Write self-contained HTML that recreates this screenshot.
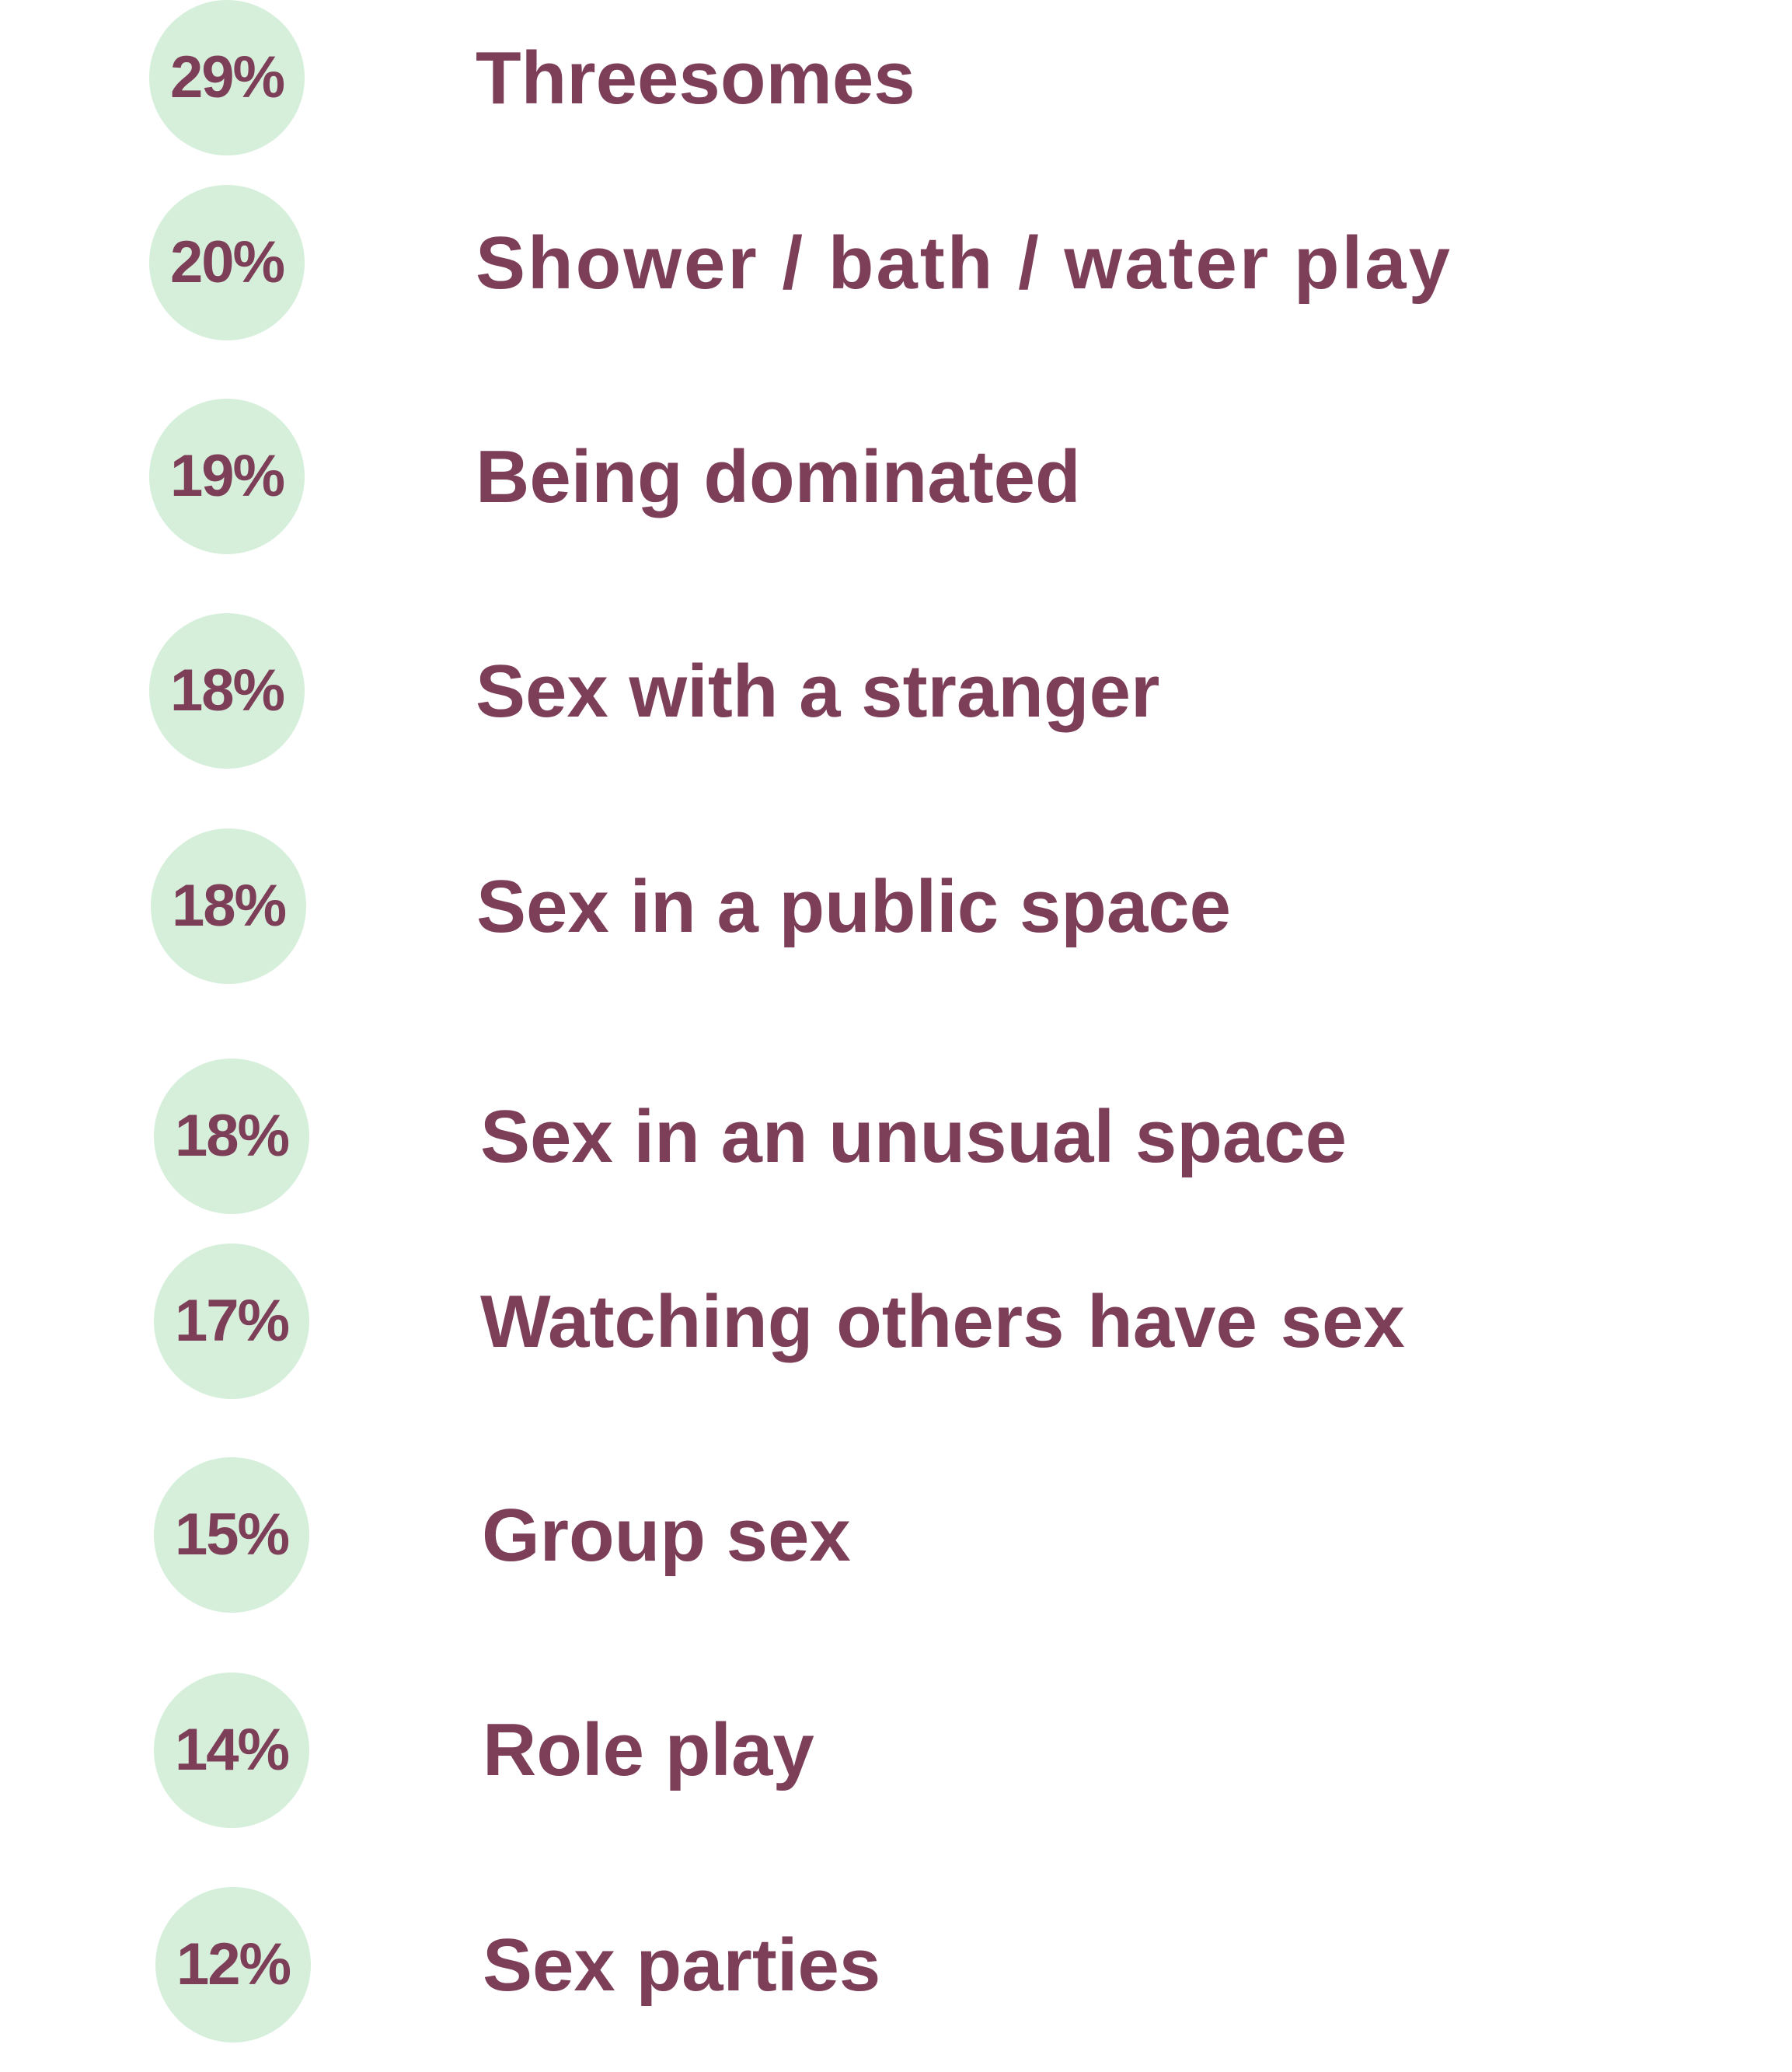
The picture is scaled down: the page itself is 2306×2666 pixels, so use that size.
<!DOCTYPE html>
<html><head><meta charset="utf-8"><style>
html,body{margin:0;padding:0;background:#fff;}
body{width:2306px;height:2666px;position:relative;overflow:hidden;font-family:"Liberation Sans",sans-serif;font-weight:bold;color:#7d3e58;}
.c{position:absolute;width:200px;height:200px;border-radius:50%;background:#d5efdb;display:flex;align-items:center;justify-content:center;font-size:76px;letter-spacing:-2px;line-height:1;}
.t{position:absolute;font-size:96px;line-height:1;white-space:nowrap;transform:translateY(-50%);}
</style></head><body>
<div class="c" style="left:192px;top:0px">29%</div><div class="t" style="left:612px;top:101px">Threesomes</div>
<div class="c" style="left:192px;top:238px">20%</div><div class="t" style="left:612px;top:339px;letter-spacing:3px">Shower / bath / water play</div>
<div class="c" style="left:192px;top:513px">19%</div><div class="t" style="left:612px;top:614px">Being dominated</div>
<div class="c" style="left:192px;top:789px">18%</div><div class="t" style="left:612px;top:890px">Sex with a stranger</div>
<div class="c" style="left:194px;top:1066px">18%</div><div class="t" style="left:613px;top:1167px">Sex in a public space</div>
<div class="c" style="left:198px;top:1362px">18%</div><div class="t" style="left:618px;top:1463px">Sex in an unusual space</div>
<div class="c" style="left:198px;top:1600px">17%</div><div class="t" style="left:618px;top:1701px;word-spacing:3px">Watching others have sex</div>
<div class="c" style="left:198px;top:1875px">15%</div><div class="t" style="left:620px;top:1976px">Group sex</div>
<div class="c" style="left:198px;top:2152px">14%</div><div class="t" style="left:621px;top:2252px">Role play</div>
<div class="c" style="left:200px;top:2428px">12%</div><div class="t" style="left:621px;top:2529px">Sex parties</div>
</body></html>
